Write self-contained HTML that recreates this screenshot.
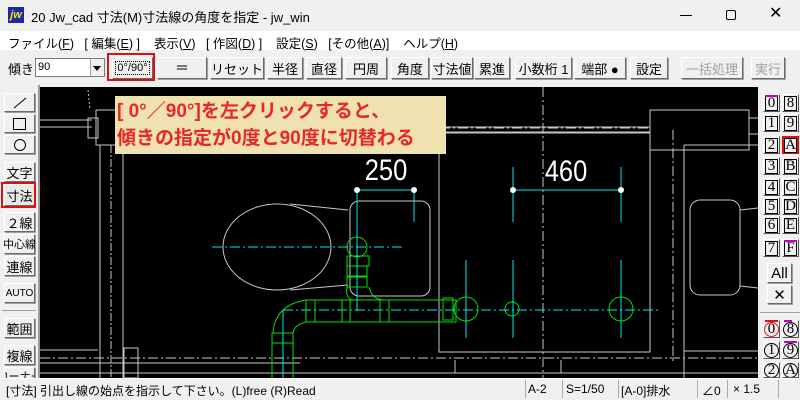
<!DOCTYPE html>
<html><head><meta charset="utf-8"><style>
*{margin:0;padding:0;box-sizing:border-box}
body{width:800px;height:400px;overflow:hidden;background:#f0f0f0;font-family:"Liberation Sans","Noto Sans CJK JP",sans-serif;font-size:12px;color:#000;position:relative}
.a{position:absolute}
.btn{position:absolute;background:#f0f0f0;border:1px solid;border-color:#fff #6a6a6a #6a6a6a #fff;box-shadow:1px 1px 0 #a0a0a0;display:flex;align-items:center;justify-content:center;font-size:13px;white-space:nowrap}
.rb{position:absolute;width:17px;height:18px;background:#f0f0f0;border:1px solid;border-color:#fff #555 #555 #fff;font-family:"Liberation Serif",serif;font-size:15px;display:flex;align-items:center;justify-content:center}
.rb span{border:1px solid #000;width:13px;height:15px;display:flex;align-items:center;justify-content:center;line-height:1}
.rb span.c{border-radius:50%;width:15px;height:15px}
</style></head><body>
<!-- title -->
<div class="a" style="left:0;top:0;width:800px;height:31px;background:#f0f0f0"></div>
<div class="a" style="left:8px;top:7px;width:16px;height:16px;background:#1b2aa8;color:#ffe000;font-size:11px;font-weight:bold;font-style:italic;line-height:16px;text-align:center">jw</div>
<div class="a" style="left:31px;top:7px;font-size:13px">20 Jw_cad 寸法(M)寸法線の角度を指定 - jw_win</div>
<div class="a" style="left:680px;top:15px;width:12px;height:1px;background:#000"></div>
<div class="a" style="left:726px;top:10px;width:10px;height:10px;border:1px solid #000;border-radius:2px"></div>
<div class="a" style="left:769px;top:4px;font-size:16px;line-height:20px">✕</div>
<!-- menu -->
<div class="a" style="left:0;top:31px;width:800px;height:19px;background:#fff"></div>
<div class="a" style="left:8px;top:33px;font-size:12.5px;white-space:pre">ファイル(<u>F</u>)   [ 編集(<u>E</u>) ]    表示(<u>V</u>)   [ 作図(<u>D</u>) ]    設定(<u>S</u>)   [その他(<u>A</u>)]    ヘルプ(<u>H</u>)</div>
<!-- toolbar -->
<div class="a" style="left:8px;top:59px;font-size:13px">傾き</div>
<div class="a" style="left:35px;top:58px;width:70px;height:19px;background:#fff;border:1px solid #7a7a7a;font-size:11px;padding-left:2px;line-height:17px">90</div>
<div class="a" style="left:90px;top:59px;width:14px;height:17px;background:#f0f0f0;border-left:1px solid #aaa"></div>
<div class="a" style="left:93px;top:66px;border:4px solid transparent;border-top:5px solid #000"></div>
<div class="btn" style="left:112px;top:57px;width:41px;height:22px;font-size:11px"><span style="border:1px dotted #000;padding:0 1px">0°/90°</span></div>
<div class="a" style="left:107px;top:53px;width:48px;height:28px;border:2px solid #e01010"></div>
<div class="btn" style="left:157px;top:57px;width:50px;height:22px;font-size:14px">＝</div>
<div class="btn" style="left:210px;top:57px;width:54px;height:22px">リセット</div>
<div class="btn" style="left:267px;top:57px;width:36px;height:22px">半径</div>
<div class="btn" style="left:306px;top:57px;width:36px;height:22px">直径</div>
<div class="btn" style="left:345px;top:57px;width:42px;height:22px">円周</div>
<div class="btn" style="left:391px;top:57px;width:38px;height:22px">角度</div>
<div class="btn" style="left:431px;top:57px;width:42px;height:22px">寸法値</div>
<div class="btn" style="left:474px;top:57px;width:36px;height:22px">累進</div>
<div class="btn" style="left:515px;top:57px;width:57px;height:22px">小数桁 1</div>
<div class="btn" style="left:574px;top:57px;width:52px;height:22px">端部 ●</div>
<div class="btn" style="left:630px;top:57px;width:38px;height:22px">設定</div>
<div class="btn" style="left:681px;top:57px;width:62px;height:22px;color:#a0a0a0">一括処理</div>
<div class="btn" style="left:751px;top:57px;width:34px;height:22px;color:#a0a0a0">実行</div>
<!-- left panel -->
<div class="btn" style="left:4px;top:93px;width:31px;height:19px"><svg width="16" height="12"><line x1="2" y1="11" x2="14" y2="1" stroke="#000"/></svg></div>
<div class="btn" style="left:4px;top:114px;width:31px;height:19px"><div style="width:13px;height:12px;border:1px solid #000"></div></div>
<div class="btn" style="left:4px;top:135px;width:31px;height:19px"><div style="width:12px;height:12px;border:1px solid #000;border-radius:50%"></div></div>
<div class="btn" style="left:4px;top:162px;width:31px;height:20px">文字</div>
<div class="btn" style="left:4px;top:184px;width:31px;height:22px;background:#e8e8e8">寸法</div>
<div class="a" style="left:1px;top:182px;width:35px;height:26px;border:2px solid #e01010"></div>
<div class="btn" style="left:4px;top:212px;width:31px;height:20px">２線</div>
<div class="btn" style="left:4px;top:234px;width:31px;height:20px;font-size:11px">中心線</div>
<div class="btn" style="left:4px;top:256px;width:31px;height:20px">連線</div>
<div class="btn" style="left:4px;top:283px;width:31px;height:20px;font-size:10px">AUTO</div>
<div class="a" style="left:2px;top:310px;width:34px;height:1px;background:#a0a0a0"></div>
<div class="btn" style="left:4px;top:318px;width:31px;height:20px">範囲</div>
<div class="btn" style="left:4px;top:345px;width:31px;height:20px">複線</div>
<div class="btn" style="left:4px;top:367px;width:31px;height:12px;overflow:hidden;align-items:flex-start;font-size:11px">コーナー</div>
<div class="a" style="left:38px;top:85px;width:2px;height:293px;background:#9a9a9a"></div>
<!-- canvas -->
<svg class="a" style="left:40px;top:87px" width="718" height="291" viewBox="40 87 718 291">
<rect x="40" y="87" width="718" height="291" fill="#000"/>
<g fill="none" stroke="#c8c8c8" stroke-width="1">
<line x1="40" y1="120" x2="92" y2="120"/><line x1="40" y1="127" x2="92" y2="127"/>
<rect x="96" y="110" width="25" height="35"/><rect x="88" y="118" width="10" height="20"/>
<line x1="100" y1="145" x2="100" y2="378"/><line x1="123" y1="145" x2="123" y2="378"/>
<line x1="111" y1="145" x2="111" y2="378" stroke-dasharray="8 2 2 2"/>
<line x1="88" y1="90" x2="90" y2="110" stroke-dasharray="2 2"/>
<line x1="40" y1="350" x2="98" y2="350"/><line x1="40" y1="363" x2="300" y2="363"/>
<line x1="40" y1="373" x2="800" y2="373"/>
<line x1="40" y1="358" x2="760" y2="358" stroke-dasharray="10 3 2 3"/>
<rect x="124" y="348" width="14" height="30"/>
<line x1="440" y1="127" x2="650" y2="127"/><line x1="440" y1="132" x2="650" y2="132"/>
<rect x="439" y="133" width="211" height="219"/>
<line x1="543" y1="87" x2="543" y2="378" stroke-dasharray="10 3 2 3"/>
<line x1="440" y1="128" x2="650" y2="128" stroke-dasharray="10 3 2 3"/>
<rect x="650" y="110" width="99" height="40"/>
<line x1="673" y1="130" x2="673" y2="362" stroke-dasharray="10 3 2 3"/>
<line x1="684" y1="145" x2="684" y2="378"/><line x1="684" y1="145" x2="760" y2="145"/>
<line x1="684" y1="351" x2="760" y2="351"/>
<rect x="749" y="118" width="11" height="16"/>
<line x1="455" y1="373" x2="455" y2="360"/><line x1="561" y1="373" x2="561" y2="360"/>
<rect x="690" y="200" width="50" height="95" rx="10"/>
<path d="M740 210 L758 208 M740 286 L758 288"/>
<ellipse cx="277" cy="247" rx="54" ry="43"/>
<path d="M290 204 L348 210 M290 290 L348 285"/>
<rect x="350" y="201" width="80" height="95" rx="9"/>
</g>
<g fill="none" stroke="#00e000" stroke-width="1">
<circle cx="357" cy="247" r="10"/>
<rect x="347" y="256" width="22" height="10"/><rect x="347" y="266" width="20" height="10"/><rect x="347" y="277" width="20" height="10"/>
<path d="M347 287 Q345 300 355 300 M369 287 Q372 300 385 300"/>
<rect x="306" y="300" width="150" height="22"/>
<line x1="315" y1="300" x2="315" y2="322"/><line x1="342" y1="300" x2="342" y2="322"/><line x1="350" y1="300" x2="350" y2="322"/><line x1="380" y1="300" x2="380" y2="322"/><line x1="389" y1="300" x2="389" y2="322"/>
<rect x="443" y="298" width="10" height="22"/>
<path d="M306 300 Q275 305 273 333 M306 322 Q294 325 293 333"/>
<rect x="272" y="333" width="21" height="10"/>
<line x1="272" y1="343" x2="272" y2="378"/><line x1="293" y1="343" x2="293" y2="378"/>
<circle cx="466" cy="309" r="12"/><circle cx="512" cy="309" r="7"/><circle cx="621" cy="309" r="12"/>
</g>
<g fill="none" stroke="#00e8e8" stroke-width="1">
<line x1="357" y1="190" x2="414" y2="190"/>
<line x1="357" y1="190" x2="357" y2="311"/><line x1="414" y1="190" x2="414" y2="222"/>
<line x1="512" y1="190" x2="621" y2="190"/>
<line x1="513" y1="167" x2="513" y2="222"/><line x1="621" y1="167" x2="621" y2="222"/>
<line x1="212" y1="247" x2="404" y2="247" stroke-dasharray="10 3 2 3"/>
<line x1="283" y1="310" x2="660" y2="310" stroke-dasharray="10 3 2 3"/>
<line x1="283" y1="310" x2="283" y2="378"/>
<line x1="466" y1="260" x2="466" y2="338"/><line x1="513" y1="260" x2="513" y2="338"/><line x1="621" y1="260" x2="621" y2="338"/>
</g>
<g fill="#fff"><circle cx="357" cy="190" r="3"/><circle cx="414" cy="190" r="3"/><circle cx="513" cy="190" r="3"/><circle cx="621" cy="190" r="3"/></g>
<text x="386" y="180" fill="#fff" font-family="Liberation Sans Narrow,Liberation Sans,sans-serif" font-size="30" text-anchor="middle" transform="translate(386 0) scale(0.85 1) translate(-386 0)">250</text>
<text x="566" y="181" fill="#fff" font-family="Liberation Sans Narrow,Liberation Sans,sans-serif" font-size="30" text-anchor="middle" transform="translate(566 0) scale(0.85 1) translate(-566 0)">460</text>
</svg>
<!-- tooltip -->
<div class="a" style="left:115px;top:96px;width:331px;height:58px;background:#f0e2b0;color:#e82828;font-weight:bold;font-size:19px;line-height:27px;padding:2px 0 0 2px;white-space:nowrap">[ 0°／90°]を左クリックすると、<br>傾きの指定が0度と90度に切替わる</div>
<!-- right panel -->
<div class="rb" style="left:763px;top:94px"><span>0</span></div><div class="a" style="left:765px;top:95px;width:13px;height:2px;background:#c000c0"></div>
<div class="rb" style="left:782px;top:94px"><span>8</span></div>
<div class="rb" style="left:763px;top:114px"><span>1</span></div><div class="rb" style="left:782px;top:114px"><span>9</span></div>
<div class="rb" style="left:763px;top:136px"><span>2</span></div><div class="rb" style="left:782px;top:136px;border:2px solid #e01010"><span>A</span></div>
<div class="rb" style="left:763px;top:157px"><span>3</span></div><div class="rb" style="left:782px;top:157px"><span>B</span></div>
<div class="rb" style="left:763px;top:178px"><span>4</span></div><div class="rb" style="left:782px;top:178px"><span>C</span></div>
<div class="rb" style="left:763px;top:197px"><span>5</span></div><div class="rb" style="left:782px;top:197px"><span>D</span></div>
<div class="rb" style="left:763px;top:216px"><span>6</span></div><div class="rb" style="left:782px;top:216px"><span>E</span></div>
<div class="rb" style="left:763px;top:239px"><span>7</span></div><div class="rb" style="left:782px;top:239px"><span>F</span></div><div class="a" style="left:784px;top:240px;width:13px;height:2px;background:#c000c0"></div>
<div class="btn" style="left:767px;top:263px;width:25px;height:20px;font-size:15px">All</div>
<div class="btn" style="left:767px;top:285px;width:25px;height:19px;font-size:15px">✕</div>
<div class="a" style="left:760px;top:312px;width:40px;height:1px;background:#a0a0a0"></div>
<div class="rb" style="left:763px;top:320px"><span class="c" style="border-color:#e01010">0</span></div><div class="a" style="left:765px;top:320px;width:13px;height:2px;background:#e01010"></div>
<div class="rb" style="left:782px;top:320px"><span class="c">8</span></div><div class="a" style="left:784px;top:320px;width:8px;height:2px;background:#c000c0"></div>
<div class="rb" style="left:763px;top:341px"><span class="c">1</span></div>
<div class="rb" style="left:782px;top:341px"><span class="c">9</span></div><div class="a" style="left:784px;top:341px;width:13px;height:2px;background:#c000c0"></div>
<div class="rb" style="left:763px;top:362px;height:16px;overflow:hidden"><span class="c">2</span></div>
<div class="rb" style="left:782px;top:362px;height:16px;overflow:hidden"><span class="c">A</span></div>
<!-- status -->
<div class="a" style="left:0;top:378px;width:800px;height:22px;background:#f0f0f0;border-top:1px solid #fff"></div>
<div class="a" style="left:6px;top:382px;font-size:12px">[寸法] 引出し線の始点を指示して下さい。(L)free (R)Read</div>
<div class="a" style="left:528px;top:382px">A-2</div>
<div class="a" style="left:566px;top:382px">S=1/50</div>
<div class="a" style="left:621px;top:382px">[A-0]排水</div>
<div class="a" style="left:702px;top:382px">∠0</div>
<div class="a" style="left:733px;top:382px">× 1.5</div>
<div class="a" style="left:525px;top:380px;width:1px;height:18px;background:#aaa"></div>
<div class="a" style="left:562px;top:380px;width:1px;height:18px;background:#aaa"></div>
<div class="a" style="left:618px;top:380px;width:1px;height:18px;background:#aaa"></div>
<div class="a" style="left:697px;top:380px;width:1px;height:18px;background:#aaa"></div>
<div class="a" style="left:727px;top:380px;width:1px;height:18px;background:#aaa"></div>
<div class="a" style="left:778px;top:380px;width:1px;height:18px;background:#aaa"></div>
</body></html>
